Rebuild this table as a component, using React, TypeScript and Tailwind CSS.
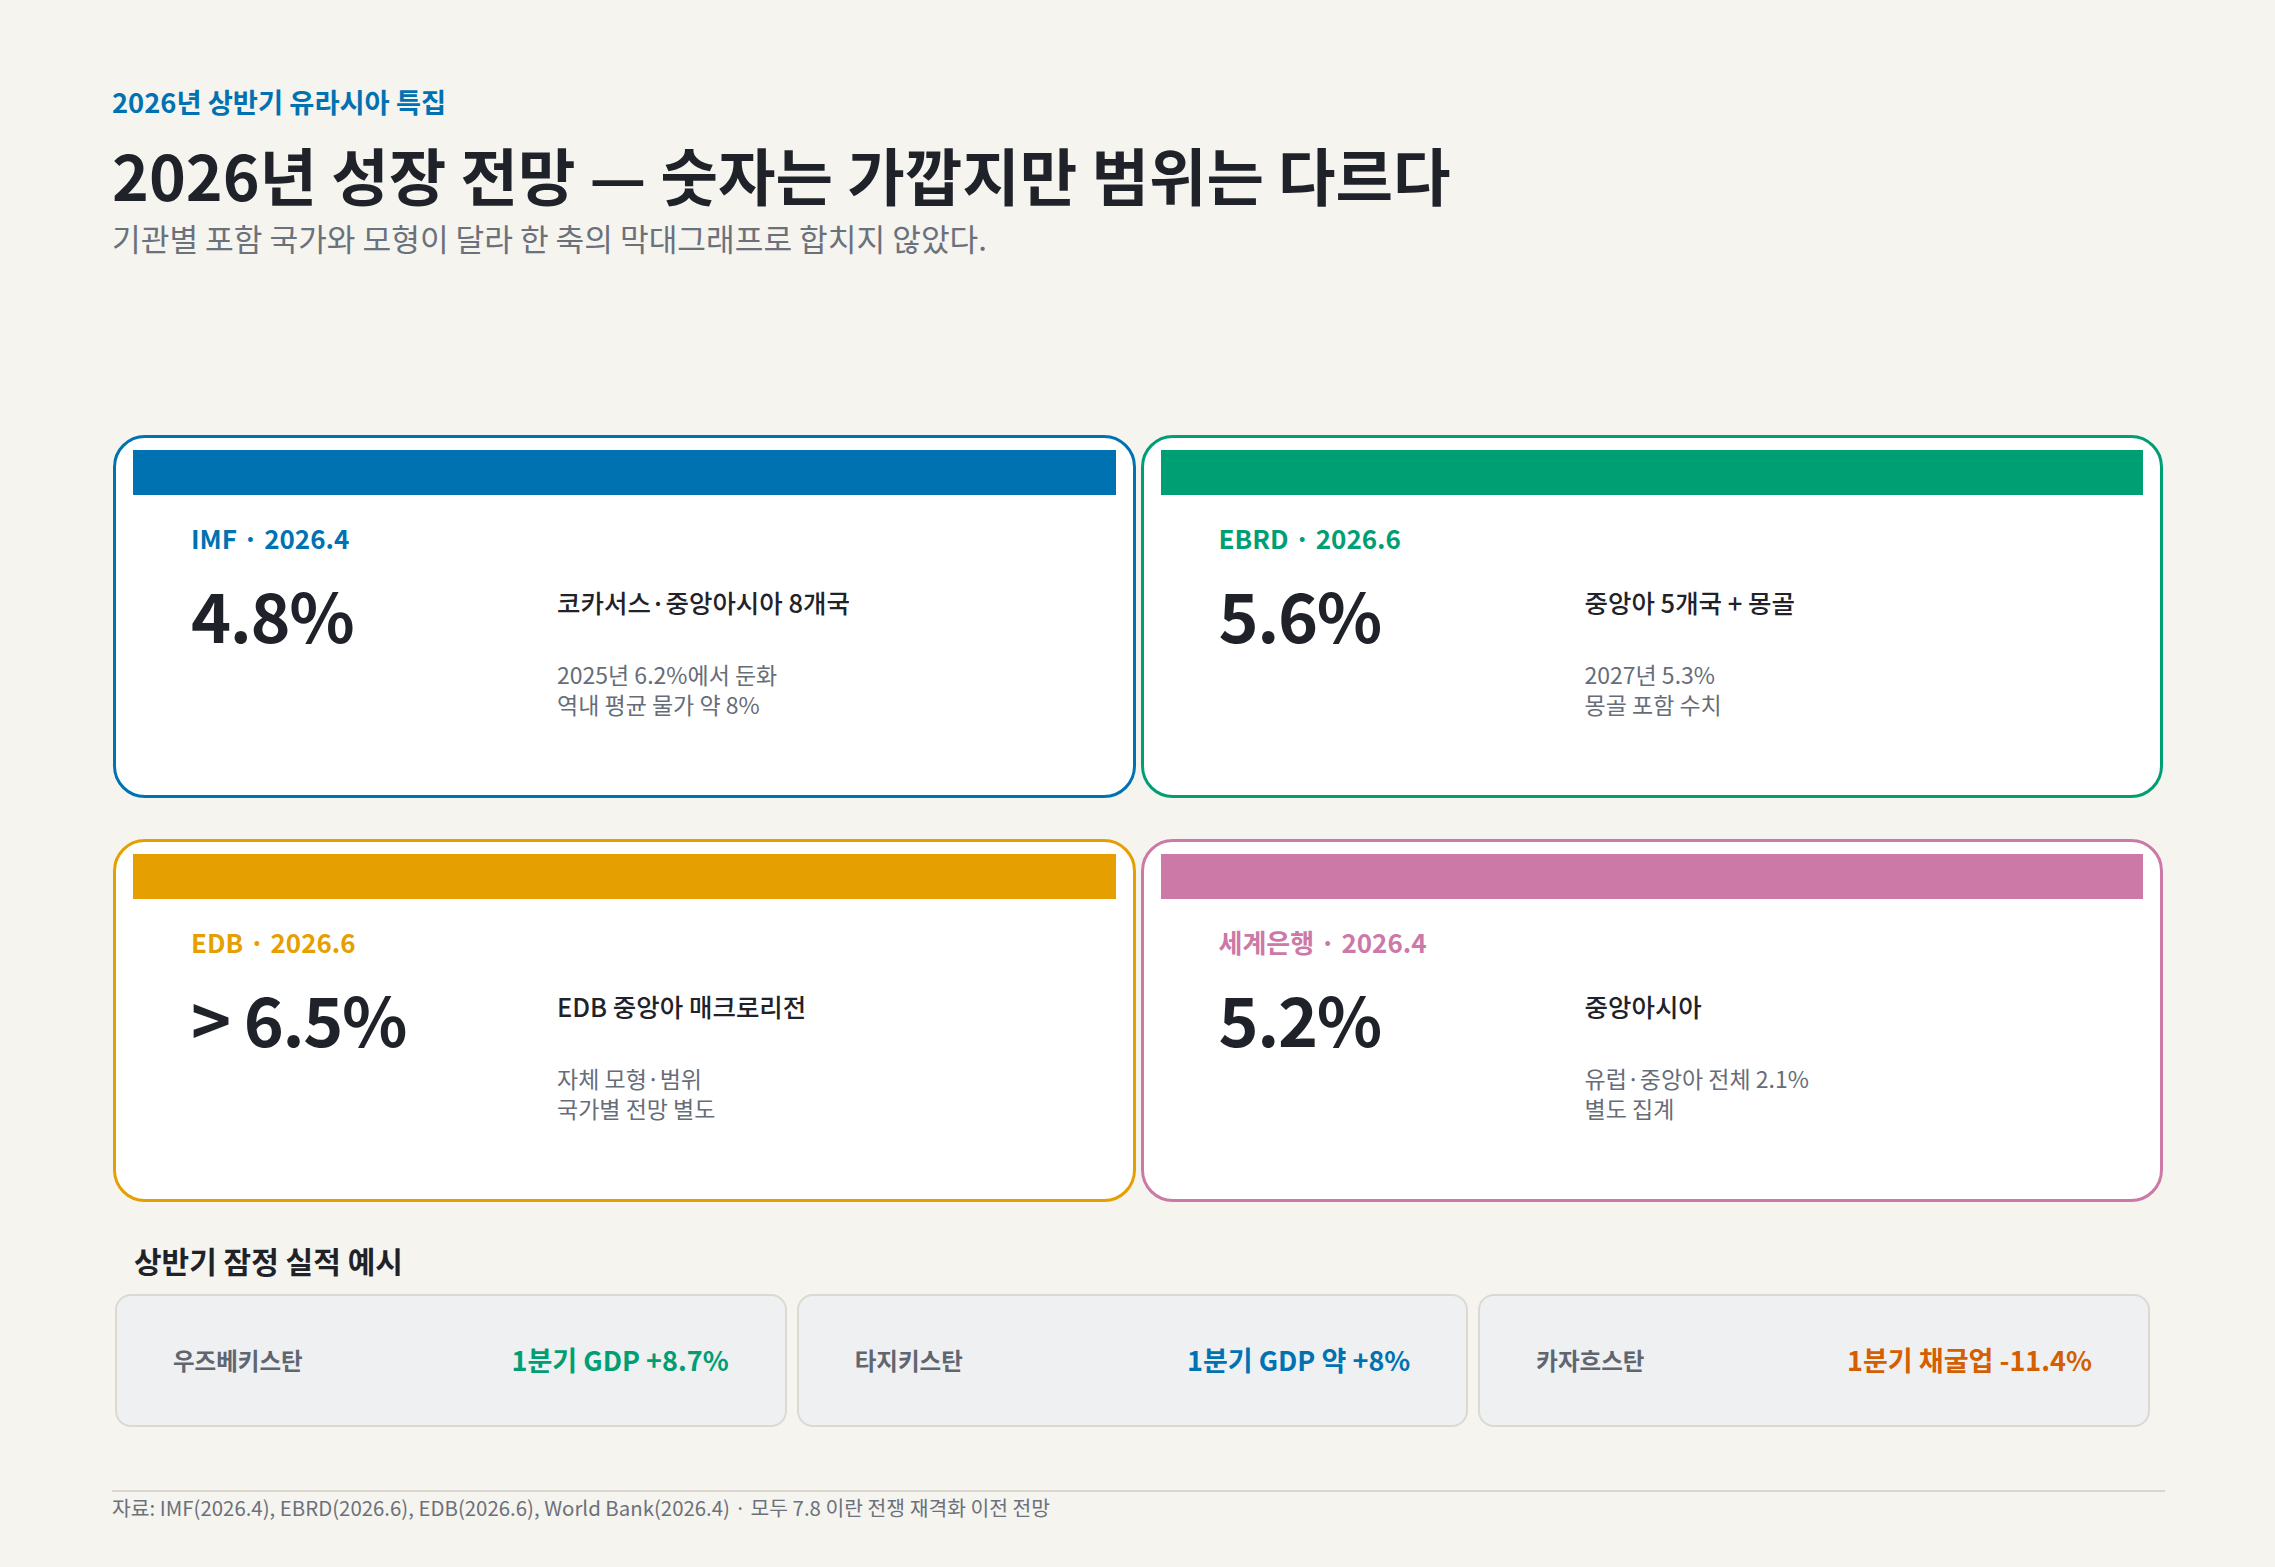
const outlooks = [
  { id: 'imf', org: 'IMF', date: '2026.4', value: '4.8%', scope: '코카서스·중앙아시아 8개국', notes: ['2025년 6.2%에서 둔화', '역내 평균 물가 약 8%'], color: 'border-[#0072B2]', bar: 'bg-[#0072B2]', text: 'text-[#0072B2]' },
  { id: 'ebrd', org: 'EBRD', date: '2026.6', value: '5.6%', scope: '중앙아 5개국 + 몽골', notes: ['2027년 5.3%', '몽골 포함 수치'], color: 'border-[#009E73]', bar: 'bg-[#009E73]', text: 'text-[#009E73]' },
  { id: 'edb', org: 'EDB', date: '2026.6', value: '> 6.5%', scope: 'EDB 중앙아 매크로리전', notes: ['자체 모형·범위', '국가별 전망 별도'], color: 'border-[#E69F00]', bar: 'bg-[#E69F00]', text: 'text-[#E69F00]' },
  { id: 'wb', org: '세계은행', date: '2026.4', value: '5.2%', scope: '중앙아시아', notes: ['유럽·중앙아 전체 2.1%', '별도 집계'], color: 'border-[#CC79A7]', bar: 'bg-[#CC79A7]', text: 'text-[#CC79A7]' },
];

const results = [
  { id: 'uz', country: '우즈베키스탄', value: '1분기 GDP +8.7%', text: 'text-[#009E73]' },
  { id: 'tj', country: '타지키스탄', value: '1분기 GDP 약 +8%', text: 'text-[#0072B2]' },
  { id: 'kz', country: '카자흐스탄', value: '1분기 채굴업 -11.4%', text: 'text-[#D55E00]' },
];

const App = () => (
  <div className="min-h-[1567px] w-full bg-[#f5f4ef] font-['Noto_Sans_CJK_KR',sans-serif] text-[#1f2329]">
    <div className="flex flex-col pl-[112px] pr-[110px] pt-[83px]">
      <p className="text-[27.3px] leading-[36px] font-bold text-[#0072B2]">2026년 상반기 유라시아 특집</p>
      <h1 className="mt-[20px] text-[62.5px] leading-[70px] font-bold text-[#1f2329]">
        2026년 성장 전망 — 숫자는 가깝지만 범위는 다르다
      </h1>
      <p className="mt-[9px] text-[31.2px] leading-[40px] text-[#6b717b]">
        기관별 포함 국가와 모형이 달라 한 축의 막대그래프로 합치지 않았다.
      </p>

      <div className="mt-[177px] ml-px mr-[2px] grid grid-cols-2 gap-x-[5px] gap-y-[41px]">
        {outlooks.map((item) => (
          <section key={item.id} className={`h-[363px] rounded-[32px] border-[3px] bg-white px-[17px] pt-[12px] ${item.color}`}>
            <div className={`h-[45px] ${item.bar}`} />
            <div className="pl-[58px] pt-[25px]">
              <p className={`text-[26px] leading-[36px] font-bold ${item.text}`}>
                {item.org} · {item.date}
              </p>
              <div className="mt-[22px] flex items-start">
                <p className="w-[366px] shrink-0 text-[68px] leading-[72px] font-bold tracking-[-0.02em] text-[#1f2329]">{item.value}</p>
                <div className="mt-[7px]">
                  <p className="text-[25.5px] leading-[34px] font-medium text-[#1f2329]">{item.scope}</p>
                  <div className="mt-[40px] text-[23px] leading-[30px] text-[#666d78]">
                    {item.notes.map((note) => (
                      <p key={note}>{note}</p>
                    ))}
                  </div>
                </div>
              </div>
            </div>
          </section>
        ))}
      </div>

      <h2 className="mt-[39px] pl-[22px] text-[30px] leading-[39px] font-bold text-[#1f2329]">상반기 잠정 실적 예시</h2>

      <div className="mt-[14px] ml-[3px] mr-[15px] grid grid-cols-3 gap-[10px]">
        {results.map((r) => (
          <div key={r.id} className="flex h-[133px] items-center justify-between rounded-[16px] border-2 border-[#dbd9d1] bg-[#eff0f2] px-[56px]">
            <span className="text-[23.5px] font-bold text-[#5f6670]">{r.country}</span>
            <span className={`text-[27px] font-bold ${r.text}`}>{r.value}</span>
          </div>
        ))}
      </div>

      <div className="mt-[63px] h-[2px] bg-[#d8d6cf]" />
      <p className="pt-px text-[20.4px] leading-[28px] text-[#6b717b]">
        자료: IMF(2026.4), EBRD(2026.6), EDB(2026.6), World Bank(2026.4) · 모두 7.8 이란 전쟁 재격화 이전 전망
      </p>
    </div>
  </div>
);

export default App;
